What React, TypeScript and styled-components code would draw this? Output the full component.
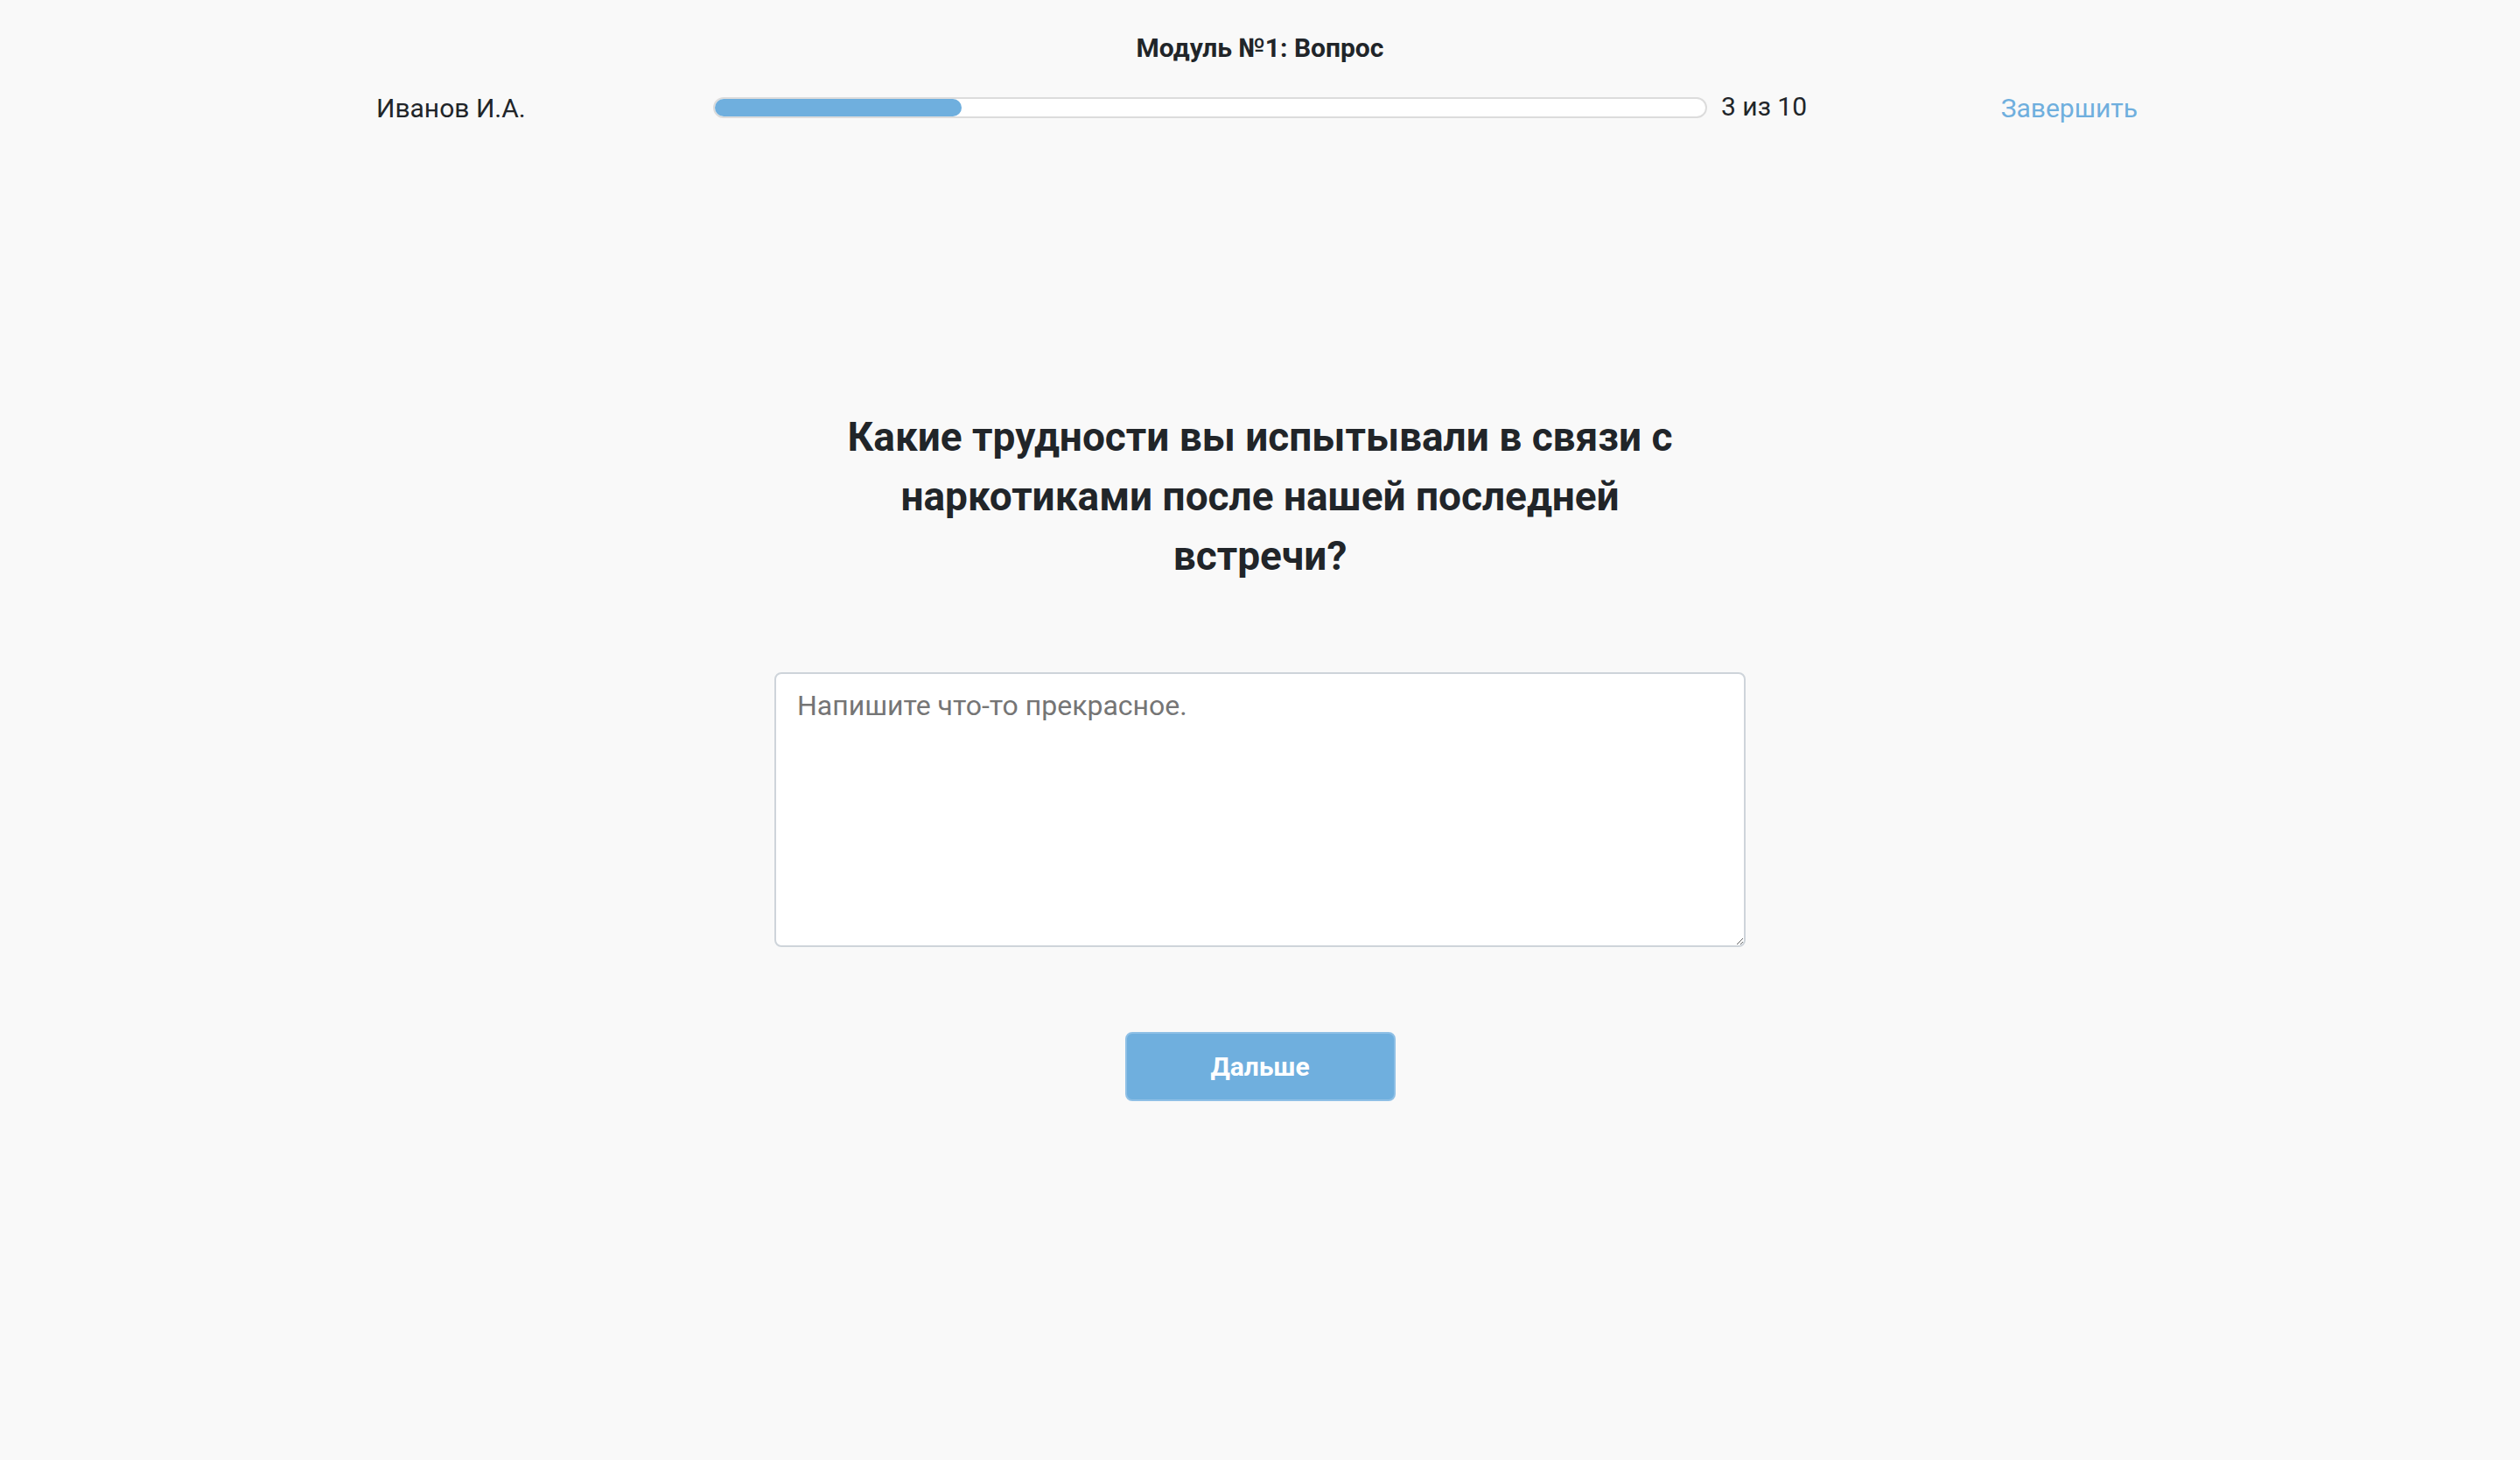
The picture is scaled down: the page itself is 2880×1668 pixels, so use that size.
import React from 'react';
import styled, { createGlobalStyle } from 'styled-components';

const ACCENT = '#6fafde';
const TEXT = '#212529';

const GlobalStyle = createGlobalStyle`
  * {
    box-sizing: border-box;
  }
  body {
    margin: 0;
    background: #f9f9f9;
    color: ${TEXT};
    font-family: Roboto, 'Noto Sans', 'Liberation Sans', sans-serif;
  }
`;

const Page = styled.div`
  width: 100%;
  min-height: 1668px;
  display: flex;
  flex-direction: column;
  align-items: center;
`;

const ModuleTitle = styled.div`
  margin-top: 31px;
  font-size: 30px;
  line-height: 48px;
  font-weight: 700;
  text-align: center;
`;

const Header = styled.div`
  width: 2020px;
  margin-top: 20px;
  height: 48px;
  display: flex;
  align-items: center;
`;

const UserName = styled.div`
  width: 385px;
  font-size: 30px;
`;

const ProgressTrack = styled.div`
  width: 1136px;
  height: 24px;
  padding: 2px;
  border: 2px solid #dcdcdc;
  border-radius: 12px;
  background: #fff;
`;

interface ProgressFillProps {
  percent: number;
}

const ProgressFill = styled.div<ProgressFillProps>`
  width: ${(props) => props.percent}%;
  margin: -2px;
  height: calc(100% + 4px);
  border-radius: 12px;
  background: ${ACCENT};
`;

const Counter = styled.div`
  margin-left: 16px;
  font-size: 30px;
  margin-top: -3px;
`;

const FinishLink = styled.a`
  margin-left: auto;
  margin-right: 7px;
  color: ${ACCENT};
  font-size: 30px;
  text-decoration: none;
  cursor: pointer;
`;

const Question = styled.h3`
  width: 1000px;
  margin: 318px 0 0;
  font-size: 46px;
  line-height: 68px;
  font-weight: 700;
  text-align: center;
`;

const Answer = styled.textarea`
  width: 1110px;
  height: 314px;
  margin-top: 99px;
  padding: 12px 24px;
  border: 2px solid #ced4da;
  border-radius: 8px;
  background: #fff;
  color: ${TEXT};
  font-family: inherit;
  font-size: 32px;
  line-height: 1.5;
  outline: none;
  ::placeholder {
    color: #6c757d;
  }
`;

const NextButton = styled.button`
  width: 309px;
  height: 79px;
  margin-top: 97px;
  border: 2px solid #8fc0e6;
  border-radius: 8px;
  background: ${ACCENT};
  color: #fff;
  font-family: inherit;
  font-size: 30px;
  font-weight: 700;
  cursor: pointer;
`;

export default function App() {
  const current = 3;
  const total = 10;

  return (
    <>
      <GlobalStyle />
      <Page>
        <ModuleTitle>Модуль №1: Вопрос</ModuleTitle>
        <Header>
          <UserName>Иванов И.А.</UserName>
          <ProgressTrack>
            <ProgressFill percent={25} />
          </ProgressTrack>
          <Counter>
            {current} из {total}
          </Counter>
          <FinishLink>Завершить</FinishLink>
        </Header>
        <Question>Какие трудности вы испытывали в связи с наркотиками после нашей последней встречи?</Question>
        <Answer placeholder="Напишите что-то прекрасное." />
        <NextButton>Дальше</NextButton>
      </Page>
    </>
  );
}
